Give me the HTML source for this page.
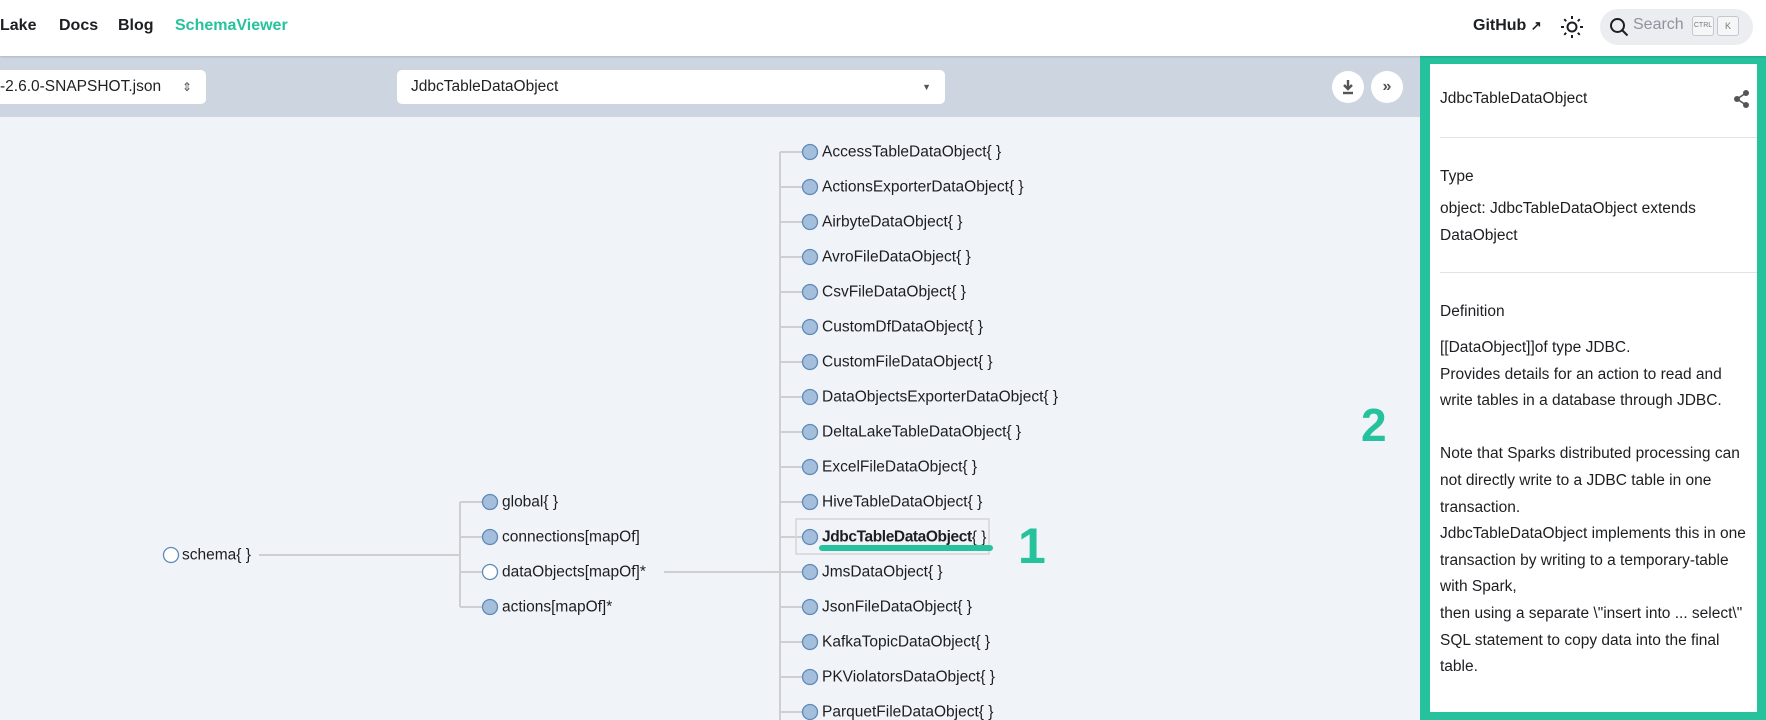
<!DOCTYPE html>
<html><head><meta charset="utf-8"><style>
*{box-sizing:border-box;margin:0;padding:0}
body{width:1766px;height:720px;overflow:hidden;font-family:"Liberation Sans",sans-serif;background:#f0f3f8;position:relative;color:#1c1e21}
.nav{position:absolute;left:0;top:0;width:1766px;height:56px;background:#fff;box-shadow:0 1px 2px rgba(0,0,0,.15);z-index:2}
.nav a{position:absolute;top:17px;font-size:16px;font-weight:bold;color:#1c1e21}
.tb{position:absolute;left:0;top:56px;width:1766px;height:61px;background:#cdd6e0}
.sel{position:absolute;background:#fff;border-radius:5px;height:34px;top:70px;font-size:15.5px;line-height:34px;color:#222}
.btn{position:absolute;top:71px;width:32px;height:32px;border-radius:50%;background:#fff}
.panel{position:absolute;left:1420px;top:54px;width:346px;height:666px;background:#25c29d;padding:10px 9px 8px 10px}
.pin{background:#fff;width:100%;height:100%;position:relative;font-size:15.5px;color:#1c1e21;overflow:hidden}
.pin div{position:absolute;left:10px;white-space:nowrap}
.hr{position:absolute;left:10px;right:0;height:1px;background:#e3e3e3}
svg text{font-family:"Liberation Sans",sans-serif;font-size:15.5px;fill:#1c1e21}
</style></head><body>
<div class="nav">
<a style="left:0">Lake</a><a style="left:59px">Docs</a><a style="left:118px">Blog</a><a style="left:175px;color:#25c29d">SchemaViewer</a>
<a style="left:1473px">GitHub <span style="font-size:13px">&#8599;</span></a>
<svg style="position:absolute;left:1560px;top:15px" width="24" height="24" viewBox="0 0 24 24" fill="none" stroke="#1c1e21" stroke-width="2"><circle cx="12" cy="12" r="4.5"/><path d="M12 1v3M12 20v3M1 12h3M20 12h3M4.2 4.2l2 2M17.8 17.8l2 2M4.2 19.8l2-2M17.8 6.2l2-2"/></svg>
<div style="position:absolute;left:1600px;top:9px;width:153px;height:36px;border-radius:18px;background:#ebedf0">
<svg style="position:absolute;left:9px;top:8px" width="20" height="20" viewBox="0 0 20 20" fill="none" stroke="#1c1e21" stroke-width="2"><circle cx="8.5" cy="8.5" r="6.5"/><path d="M13.5 13.5l5 5"/></svg>
<span style="position:absolute;left:33px;top:7px;font-size:16px;color:#8d949e">Search</span>
<span style="position:absolute;left:92px;top:7px;width:22px;height:20px;border:1px solid #c4c7cc;border-radius:3px;background:#f5f6f7;font-size:7px;line-height:18px;text-align:center;color:#777">CTRL</span>
<span style="position:absolute;left:117px;top:7px;width:22px;height:20px;border:1px solid #c4c7cc;border-radius:3px;background:#f5f6f7;font-size:9px;line-height:18px;text-align:center;color:#777">K</span>
</div>
</div>
<div class="tb"></div>
<div class="sel" style="left:-10px;width:216px;padding-left:10px">-2.6.0-SNAPSHOT.json<span style="position:absolute;right:14px;top:0;font-size:12px;color:#555">&#8661;</span></div>
<div class="sel" style="left:397px;width:548px;padding-left:14px">JdbcTableDataObject<span style="position:absolute;right:14px;top:0;font-size:9px;color:#555">&#9660;</span></div>
<div class="btn" style="left:1332px"><svg width="32" height="32" viewBox="0 0 32 32"><path d="M16 9v9M12 14l4 4 4-4" stroke="#555" stroke-width="2.4" fill="none"/><path d="M11 22h10" stroke="#555" stroke-width="2.4"/></svg></div>
<div class="btn" style="left:1371px;font-size:16px;color:#555;text-align:center;line-height:31px;font-weight:bold">&#187;</div>

<svg style="position:absolute;left:0;top:117px" width="1420" height="603" viewBox="0 117 1420 603">
<g stroke="#cfcfd1" stroke-width="2" fill="none">
<path d="M259 555H460M460 502V607M460 502H482M460 537H482M460 572H482M460 607H482M664 572H780M780 152V720"/>
<path d="M780 152h22M780 187h22M780 222h22M780 257h22M780 292h22M780 327h22M780 362h22M780 397h22M780 432h22M780 467h22M780 502h22M780 537h22M780 572h22M780 607h22M780 642h22M780 677h22M780 712h22"/>
</g>
<rect x="796" y="519" width="193" height="35" fill="none" stroke="#d5d5d5" stroke-width="1.5"/>
<g stroke="#5e89b8" stroke-width="1.3">
<circle cx="171" cy="555" r="7.5" fill="#fff"/>
<circle cx="490" cy="502" r="7.5" fill="#a3bfdb"/><circle cx="490" cy="537" r="7.5" fill="#a3bfdb"/><circle cx="490" cy="572" r="7.5" fill="#fff"/><circle cx="490" cy="607" r="7.5" fill="#a3bfdb"/>
<g fill="#a3bfdb"><circle cx="810" cy="152" r="7.5"/><circle cx="810" cy="187" r="7.5"/><circle cx="810" cy="222" r="7.5"/><circle cx="810" cy="257" r="7.5"/><circle cx="810" cy="292" r="7.5"/><circle cx="810" cy="327" r="7.5"/><circle cx="810" cy="362" r="7.5"/><circle cx="810" cy="397" r="7.5"/><circle cx="810" cy="432" r="7.5"/><circle cx="810" cy="467" r="7.5"/><circle cx="810" cy="502" r="7.5"/><circle cx="810" cy="537" r="7.5"/><circle cx="810" cy="572" r="7.5"/><circle cx="810" cy="607" r="7.5"/><circle cx="810" cy="642" r="7.5"/><circle cx="810" cy="677" r="7.5"/><circle cx="810" cy="712" r="7.5"/></g>
</g>
<g dominant-baseline="central">
<text x="182" y="555">schema{ }</text>
<text x="502" y="502">global{ }</text><text x="502" y="537">connections[mapOf]</text><text x="502" y="572">dataObjects[mapOf]*</text><text x="502" y="607">actions[mapOf]*</text>
<text x="822" y="152">AccessTableDataObject{ }</text>
<text x="822" y="187">ActionsExporterDataObject{ }</text>
<text x="822" y="222">AirbyteDataObject{ }</text>
<text x="822" y="257">AvroFileDataObject{ }</text>
<text x="822" y="292">CsvFileDataObject{ }</text>
<text x="822" y="327">CustomDfDataObject{ }</text>
<text x="822" y="362">CustomFileDataObject{ }</text>
<text x="822" y="397">DataObjectsExporterDataObject{ }</text>
<text x="822" y="432">DeltaLakeTableDataObject{ }</text>
<text x="822" y="467">ExcelFileDataObject{ }</text>
<text x="822" y="502">HiveTableDataObject{ }</text>
<text x="822" y="537" font-weight="bold" letter-spacing="-0.4">JdbcTableDataObject<tspan font-weight="normal" letter-spacing="0">{ }</tspan></text>
<text x="822" y="572">JmsDataObject{ }</text>
<text x="822" y="607">JsonFileDataObject{ }</text>
<text x="822" y="642">KafkaTopicDataObject{ }</text>
<text x="822" y="677">PKViolatorsDataObject{ }</text>
<text x="822" y="712">ParquetFileDataObject{ }</text>
</g>
<path d="M822 548H990" stroke="#25c29d" stroke-width="6" stroke-linecap="round"/>
<text x="1018" y="563" style="font-size:50px;font-weight:bold;fill:#25c29d">1</text>
<text x="1361" y="441" style="font-size:46px;font-weight:bold;fill:#25c29d">2</text>
</svg>

<div class="panel"><div class="pin">
<div style="top:26px">JdbcTableDataObject</div>
<svg style="position:absolute;right:6px;top:25px" width="18" height="20" viewBox="0 0 18 20" fill="#555"><circle cx="13" cy="4" r="3"/><circle cx="4" cy="10" r="3"/><circle cx="13" cy="16" r="3"/><path d="M13 4L4 10l9 6" stroke="#555" stroke-width="1.6" fill="none"/></svg>
<div class="hr" style="top:73px"></div>
<div style="top:104px">Type</div>
<div style="top:136px">object: JdbcTableDataObject extends</div>
<div style="top:163px">DataObject</div>
<div class="hr" style="top:208px"></div>
<div style="top:239px">Definition</div>
<div style="top:271px;line-height:26.6px;white-space:pre">[[DataObject]]of type JDBC.
Provides details for an action to read and
write tables in a database through JDBC.

Note that Sparks distributed processing can
not directly write to a JDBC table in one
transaction.
JdbcTableDataObject implements this in one
transaction by writing to a temporary-table
with Spark,
then using a separate \"insert into ... select\"
SQL statement to copy data into the final
table.

JdbcTableDataObject implements</div>
</div></div>
</body></html>
